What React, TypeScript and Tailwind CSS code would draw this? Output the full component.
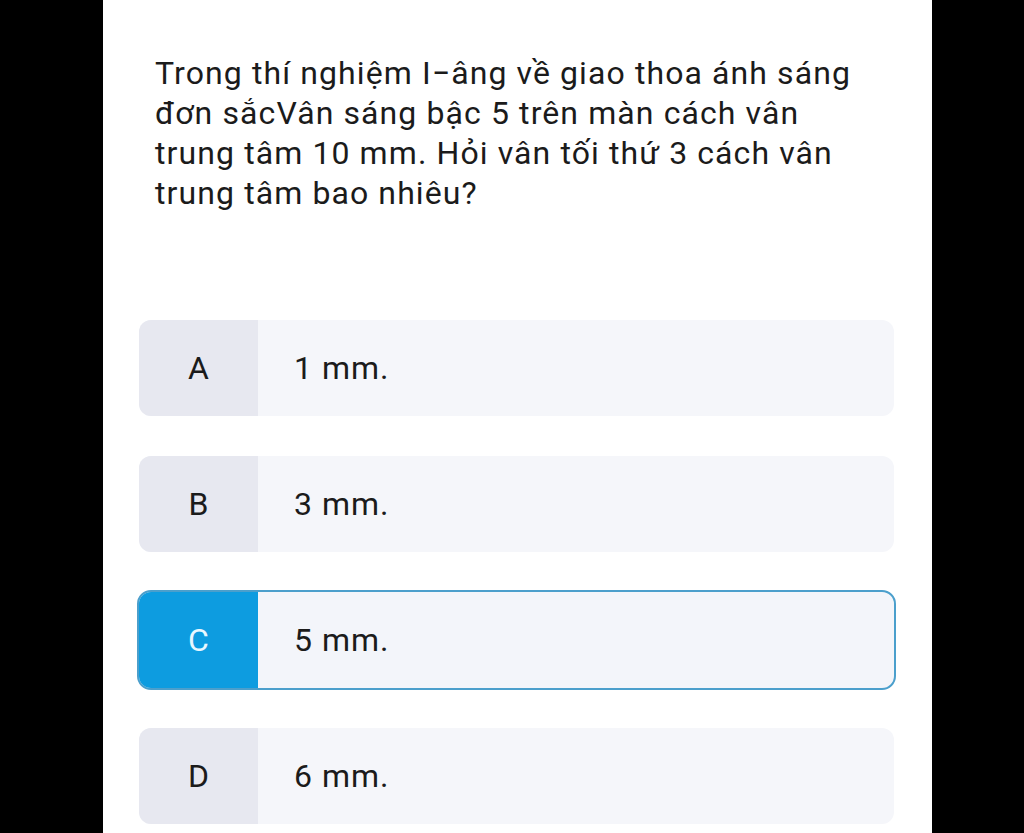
import React from 'react';

const options = [
    { key: 'A', text: '1 mm.' },
    { key: 'B', text: '3 mm.' },
    { key: 'C', text: '5 mm.' },
    { key: 'D', text: '6 mm.' },
];

export default function App() {
    const selected = 'C';

    return (
        <div className="flex h-[833px] w-full bg-black overflow-hidden" style={{ fontFamily: 'Roboto, "Noto Sans", sans-serif' }}>
            <div className="ml-[103px] w-[829px] h-full bg-white">
                <p className="pt-[53px] pl-[52px] pr-[52px] text-[32px] leading-[40px] tracking-[1.1px] text-[#1b1b1b]">
                    Trong thí nghiệm I−âng về giao thoa ánh sáng đơn sắcVân sáng bậc 5 trên màn cách vân trung tâm 10 mm. Hỏi vân tối thứ 3 cách vân trung tâm bao nhiêu?
                </p>

                <div className="mt-[105px] ml-[34px] mr-[36px] flex flex-col gap-[36px]">
                    {options.map(opt => {
                        const active = opt.key === selected;
                        return (
                            <div
                                key={opt.key}
                                className={
                                    active
                                        ? 'flex h-[100px] rounded-[14px] border-2 border-[#4b9fcc] bg-[#f3f5fa] overflow-hidden'
                                        : 'flex h-[100px] rounded-[14px] border-2 border-transparent bg-clip-padding bg-[#f5f6fa] overflow-hidden'
                                }
                            >
                                <div
                                    className={
                                        active
                                            ? 'w-[119px] flex items-center justify-center bg-[#0d9ce0] text-[#e8f7ff] text-[32px]'
                                            : 'w-[119px] flex items-center justify-center bg-[#e7e8f0] text-[#1b1b1b] text-[32px]'
                                    }
                                >
                                    {opt.key}
                                </div>
                                <div className="flex items-center pl-[36px] text-[32px] tracking-[1px] text-[#1b1b1b]">
                                    {opt.text}
                                </div>
                            </div>
                        );
                    })}
                </div>
            </div>
        </div>
    );
}
